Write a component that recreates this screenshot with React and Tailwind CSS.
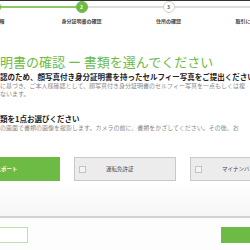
import React from "react";

const GREEN = "bg-[#6dbb44]";

function Step({ num, label, state, left, right }) {
  const circle =
    state === "todo"
      ? "bg-white border-[#cfcfcf] text-[#555]"
      : "bg-[#6dbb44] border-[#6dbb44] text-white";
  return (
    <div className="w-[87px] shrink-0 flex flex-col items-center">
      <div className="w-full flex items-center h-[12px]">
        <div className={`flex-1 h-[1.5px] ${left}`} />
        <div
          className={`w-[12px] h-[12px] rounded-full border flex items-center justify-center text-[5px] font-bold ${circle}`}
        >
          {num}
        </div>
        <div className={`flex-1 h-[1.5px] ${right}`} />
      </div>
      <div className="mt-[5px] text-[5px] leading-[6px] font-bold text-[#444] whitespace-nowrap">
        {label}
      </div>
    </div>
  );
}

function Choice({ label, active }) {
  if (active) {
    return (
      <div className={`w-[102px] h-[24px] shrink-0 ${GREEN} flex items-center pl-[32px]`}>
        <span className="text-[5.5px] font-bold text-white whitespace-nowrap">{label}</span>
      </div>
    );
  }
  return (
    <div className="w-[102px] h-[24px] shrink-0 bg-[#ececec] border border-[#c9c9c9] flex items-center pl-[4px]">
      <div className="w-[7px] h-[7px] border border-[#c4c4c4] bg-[#f4f4f4]" />
      <span className="ml-[20px] text-[5.5px] text-[#444] whitespace-nowrap">{label}</span>
    </div>
  );
}

export default function App() {
  return (
    <div
      className="w-[250px] h-[250px] overflow-hidden bg-white flex flex-col"
      style={{ fontFamily: '"Noto Sans CJK JP", "Noto Sans", sans-serif' }}
    >
      <div className="h-[1px] bg-[#333] shrink-0" />
      <div className="flex ml-[-49px] shrink-0">
        <Step num="1" label="基本情報" state="done" left="bg-[#8cc866]" right="bg-[#8cc866]" />
        <Step num="2" label="身分証明書の確認" state="current" left="bg-[#8cc866]" right="bg-[#dddddd]" />
        <Step num="3" label="住所の確認" state="todo" left="bg-[#dddddd]" right="bg-[#dddddd]" />
        <Step num="4" label="取引に関する質問" state="todo" left="bg-[#dddddd]" right="bg-[#dddddd]" />
      </div>

      <div className="mt-[30px] text-[13px] leading-[16px] text-[#6dbb44] whitespace-nowrap shrink-0">
        明書の確認 ー 書類を選んでください
      </div>
      <div className="mt-[2px] text-[7.5px] leading-[9px] font-bold text-[#222] whitespace-nowrap shrink-0">
        認のため、顔写真付き身分証明書を持ったセルフィー写真をご提出ください
      </div>
      <div className="mt-[1px] text-[6px] leading-[8px] text-[#8a8a8a] whitespace-nowrap shrink-0">
        に基づき、ご本人様確認として、顔写真付き身分証明書のセルフィー写真を一点もしくは複
        <br />
        ないます。
      </div>

      <div className="mt-[16px] text-[7.5px] leading-[10px] font-bold text-[#222] whitespace-nowrap shrink-0">
        類を1点お選びください
      </div>
      <div className="text-[6px] leading-[8px] text-[#8a8a8a] whitespace-nowrap shrink-0">
        の画面で書類の画像を撮影します。カメラの前に、書類をかざしてください。その後、お
      </div>

      <div className="mt-[25px] flex gap-[14px] ml-[-42px] shrink-0">
        <Choice label="パスポート" active />
        <Choice label="運転免許証" />
        <Choice label="マイナンバーカード" />
      </div>

      <div className="flex-1 bg-gradient-to-b from-white to-[#f6f6f6]" />
      <div className="h-[2px] bg-[#d2d2d2] shrink-0" />
      <div className="h-[32px] shrink-0 bg-[#fdfdfd] flex items-start justify-between pt-[9px]">
        <div className="w-[80px] h-[16px] ml-[-52px] bg-white border border-[#bfe0a8]" />
        <div className={`w-[80px] h-[16px] mr-[-51px] ${GREEN}`} />
      </div>
    </div>
  );
}
